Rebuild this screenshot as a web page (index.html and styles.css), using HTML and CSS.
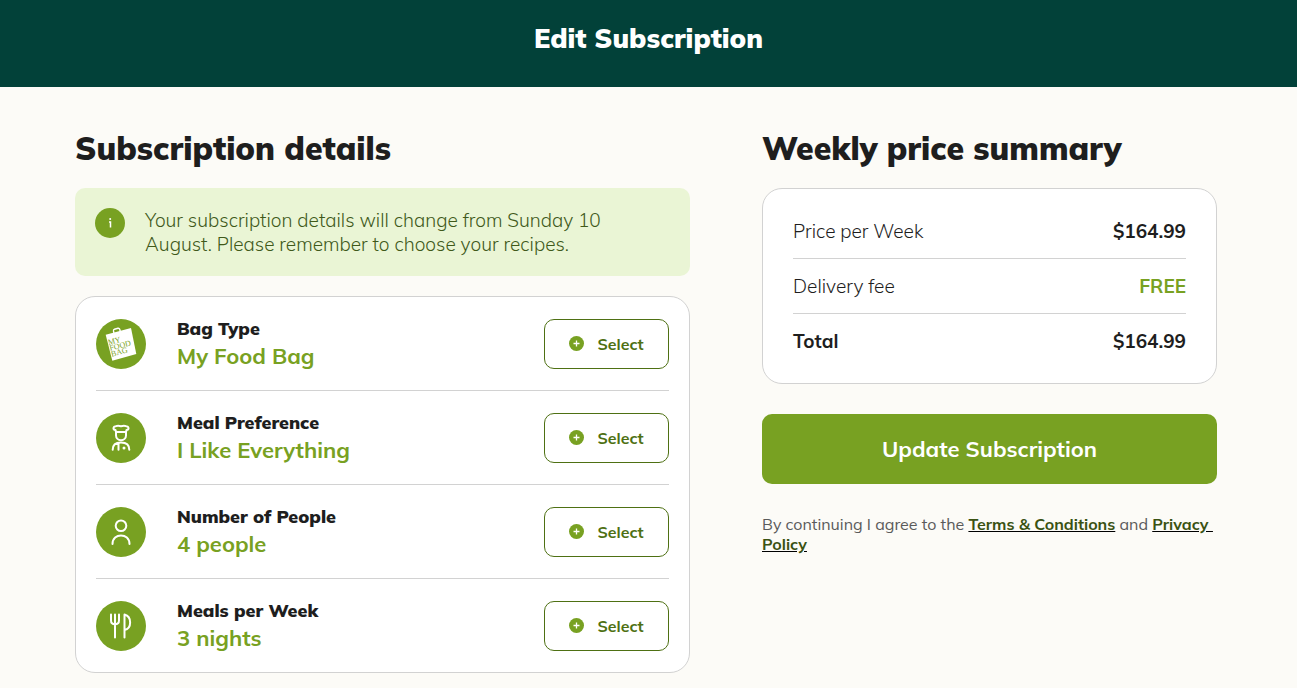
FILE: index.html
```html
<!DOCTYPE html>
<html lang="en">
<head>
    <meta charset="UTF-8">
    <meta name="viewport" content="width=device-width, initial-scale=1">
    <title>Edit Subscription</title>
    <link rel="stylesheet" href="styles.css">
</head>
<body>
    <header class="page-header">
        <h1>Edit Subscription</h1>
    </header>

    <main class="container">
        <section class="details">
            <h2>Subscription details</h2>

            <div class="notice">
                <svg class="notice-icon" viewBox="0 0 30 30" aria-hidden="true">
                    <circle cx="15" cy="15" r="15" fill="#78a122"/>
                    <path d="M14 14h1.500v5.500" fill="none" stroke="#fff" stroke-width="1.500"/>
                    <circle cx="15.200" cy="11" r="1" fill="#fff"/>
                </svg>
                <p>Your subscription details will change from Sunday 10 August. Please remember to choose your recipes.</p>
            </div>

            <ul class="card options">
                <li class="option">
                    <svg class="option-icon" viewBox="0 0 50 50" aria-hidden="true">
                        <circle cx="25" cy="25" r="25" fill="#78a122"/>
                        <path d="M18 14.500l-.500-2.500q-.300-1.400 1-1.800l3.400-.900q1.400-.300 1.800 1l.700 2.500" fill="none" stroke="#fff" stroke-width="1.400"/>
                        <path d="M9.700 15.700L35 9l5.300 26-24 6.700z" fill="#fff"/>
                        <g class="bag-text" transform="rotate(-15 13 27)">
                            <text x="13" y="26">MY</text>
                            <text x="13" y="32">FOOD</text>
                            <text x="13" y="38">BAG</text>
                        </g>
                    </svg>
                    <div class="option-text">
                        <h3>Bag Type</h3>
                        <p>My Food Bag</p>
                    </div>
                    <button type="button" class="select-button">
                        <svg viewBox="0 0 15 15" aria-hidden="true"><circle cx="7.500" cy="7.500" r="7.500" fill="#78a122"/><path d="M4.500 7.500h6M7.500 4.500v6" stroke="#fff" stroke-width="1.300"/></svg>
                        Select
                    </button>
                </li>
                <li class="option">
                    <svg class="option-icon" viewBox="0 0 50 50" aria-hidden="true">
                        <circle cx="25" cy="25" r="25" fill="#78a122"/>
                        <g class="icon-lines">
                            <path d="M20 19l-.500-2c-3-.500-2.500-4 .500-3.800 1.500-.800 3-.600 5 0 2-.600 3.500-.800 5 0 3-.200 3.500 3.300.500 3.800l-.500 2z"/>
                            <path d="M20 19v3.500a5 4.700 0 0 0 10 0v-3.500"/>
                            <path d="M16.700 36.700c0-4.500 3-7.200 8.300-7.200s8.300 2.700 8.300 7.200M22.500 30.500v6.200"/>
                        </g>
                        <circle cx="28" cy="35" r="1.500" fill="#fff"/>
                    </svg>
                    <div class="option-text">
                        <h3>Meal Preference</h3>
                        <p>I Like Everything</p>
                    </div>
                    <button type="button" class="select-button">
                        <svg viewBox="0 0 15 15" aria-hidden="true"><circle cx="7.500" cy="7.500" r="7.500" fill="#78a122"/><path d="M4.500 7.500h6M7.500 4.500v6" stroke="#fff" stroke-width="1.300"/></svg>
                        Select
                    </button>
                </li>
                <li class="option">
                    <svg class="option-icon" viewBox="0 0 50 50" aria-hidden="true">
                        <circle cx="25" cy="25" r="25" fill="#78a122"/>
                        <g class="icon-lines">
                            <circle cx="25" cy="18.700" r="5.300"/>
                            <path d="M16.500 37c0-11.500 17-11.500 17 0"/>
                        </g>
                    </svg>
                    <div class="option-text">
                        <h3>Number of People</h3>
                        <p>4 people</p>
                    </div>
                    <button type="button" class="select-button">
                        <svg viewBox="0 0 15 15" aria-hidden="true"><circle cx="7.500" cy="7.500" r="7.500" fill="#78a122"/><path d="M4.500 7.500h6M7.500 4.500v6" stroke="#fff" stroke-width="1.300"/></svg>
                        Select
                    </button>
                </li>
                <li class="option">
                    <svg class="option-icon" viewBox="0 0 50 50" aria-hidden="true">
                        <circle cx="25" cy="25" r="25" fill="#78a122"/>
                        <g class="icon-lines">
                            <path d="M15 13.500v6c0 5 8 5 8 0v-6M19 13.500v23"/>
                            <path d="M28.500 36.500v-23c7.500 2 7.500 14 0 15.500"/>
                        </g>
                    </svg>
                    <div class="option-text">
                        <h3>Meals per Week</h3>
                        <p>3 nights</p>
                    </div>
                    <button type="button" class="select-button">
                        <svg viewBox="0 0 15 15" aria-hidden="true"><circle cx="7.500" cy="7.500" r="7.500" fill="#78a122"/><path d="M4.500 7.500h6M7.500 4.500v6" stroke="#fff" stroke-width="1.300"/></svg>
                        Select
                    </button>
                </li>
            </ul>
        </section>

        <section class="summary">
            <h2>Weekly price summary</h2>

            <table class="card prices">
                <tbody>
                    <tr>
                        <th scope="row">Price per Week</th>
                        <td>$164.99</td>
                    </tr>
                    <tr>
                        <th scope="row">Delivery fee</th>
                        <td class="free">FREE</td>
                    </tr>
                    <tr class="total">
                        <th scope="row">Total</th>
                        <td>$164.99</td>
                    </tr>
                </tbody>
            </table>

            <button type="submit" class="update-button">Update Subscription</button>

            <p class="terms">By continuing I agree to the <a href="#">Terms &amp; Conditions</a> and <a href="#">Privacy&nbsp;<br>Policy</a></p>
        </section>
    </main>
</body>
</html>
```

FILE: styles.css
```css
* {
    box-sizing: border-box;
}

body {
    font-family: "Mulish", "Open Sans", sans-serif;
    margin: 0;
    color: #1e1e1e;
    background-color: #fcfbf7;
}

h1,
h2,
h3,
p {
    margin: 0;
}

.page-header {
    height: 87px;
    padding-top: 20px;
    background-color: #024139;
    color: #fff;
    text-align: center;
}

h1 {
    font-size: 27px;
    line-height: 36px;
    font-weight: 900;
}

.container {
    display: grid;
    grid-template-columns: 615fr 455fr;
    gap: 72px;
    padding: 41px 80px 15px 75px;
}

h2 {
    margin-bottom: 20px;
    font-size: 32px;
    line-height: 40px;
    font-weight: 900;
    white-space: nowrap;
}

.notice {
    display: flex;
    gap: 20px;
    margin-bottom: 20px;
    padding: 20px;
    padding-right: 60px;
    border-radius: 10px;
    background-color: #eaf5d5;
    color: #40591a;
    font-size: 19px;
    line-height: 24px;
    font-weight: 300;
}

.notice-icon {
    flex: none;
    width: 30px;
    height: 30px;
}

.card {
    border: 1px solid #d2d2d2;
    border-radius: 20px;
    background-color: #fff;
}

.options {
    margin: 0;
    padding: 0 20px;
    list-style: none;
}

.option {
    display: flex;
    align-items: center;
    height: 94px;
    border-bottom: 1px solid #d2d2d2;
}

.option:last-child {
    height: 93px;
    border-bottom: none;
}

.option-icon {
    width: 50px;
    height: 50px;
    margin-right: 31px;
}

.icon-lines {
    fill: none;
    stroke: #fff;
    stroke-width: 2;
    stroke-linecap: round;
    stroke-linejoin: round;
}

.bag-text {
    font-family: "Liberation Serif", serif;
    font-size: 8px;
    font-weight: 400;
    fill: #78a122;
}

.option-text {
    flex: 1;
}

h3 {
    font-size: 18px;
    line-height: 24px;
    font-weight: 900;
}

.option-text p {
    color: #78a122;
    font-size: 22px;
    line-height: 30px;
    font-weight: 700;
}

button {
    font-family: inherit;
    cursor: pointer;
}

.select-button {
    display: flex;
    align-items: center;
    justify-content: center;
    gap: 13px;
    width: 125px;
    height: 50px;
    border: 1px solid #4e7013;
    border-radius: 10px;
    background-color: #fff;
    color: #4e7013;
    font-size: 16px;
    font-weight: 700;
}

.select-button svg {
    width: 15px;
    height: 15px;
}

.prices {
    width: 100%;
    padding: 15px 30px;
    border-spacing: 0;
    font-size: 19px;
    line-height: 24px;
}

.prices th,
.prices td {
    height: 55px;
    padding: 0;
    border-bottom: 1px solid #d2d2d2;
    font-weight: 300;
    text-align: left;
}

.prices td {
    font-weight: 700;
    text-align: right;
}

.prices .free {
    color: #78a122;
}

.prices .total th,
.prices .total td {
    height: 54px;
    border-bottom: none;
    font-weight: 700;
}

.update-button {
    width: 100%;
    height: 70px;
    margin: 30px 0;
    border: none;
    border-radius: 10px;
    background-color: #78a122;
    color: #fff;
    font-size: 22px;
    font-weight: 700;
}

.terms {
    color: #5a5a5a;
    font-size: 16px;
    line-height: 20px;
}

.terms a {
    color: #3a5212;
    font-weight: 700;
    text-decoration-color: #000;
}
```
